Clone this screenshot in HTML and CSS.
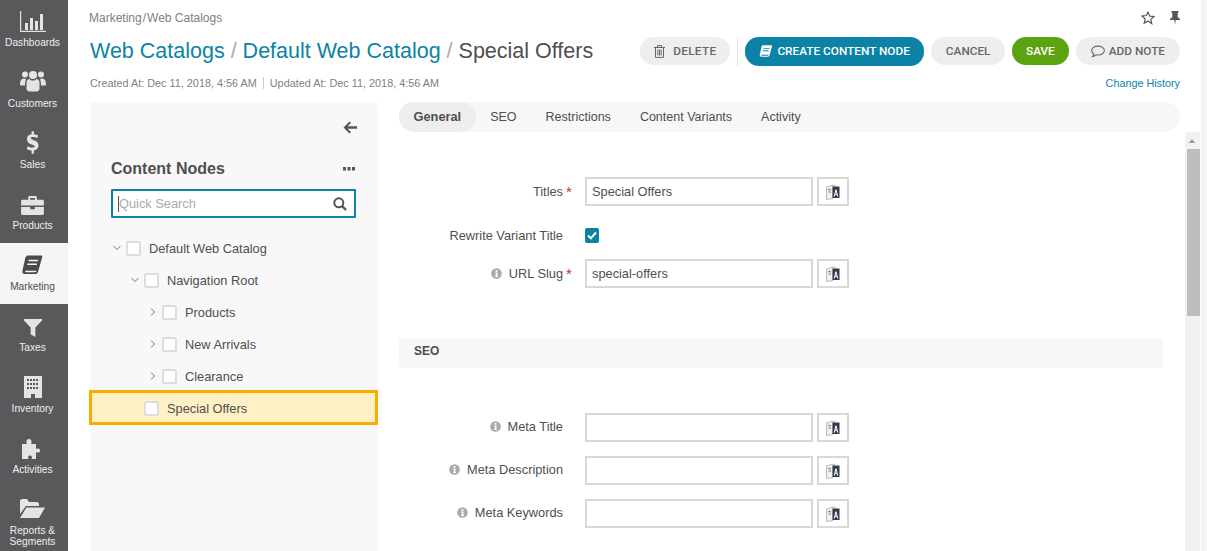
FILE: index.html
```html
<!DOCTYPE html>
<html lang="en">
<head>
    <title>Special Offers</title>
    <meta charset="utf-8">
    <link rel="stylesheet" href="styles.css">
</head>
<body>
<svg class="defs" width="0" height="0">
    <symbol id="i-translate" viewBox="0 0 14 16">
        <path d="M.5 3L7 1v13.500l-6.500 1z" fill="#f2f2f2" stroke="#aaa" stroke-width=".8"/>
        <path d="M6.500 2.500h7V14h-7z" fill="#2f3a4a"/>
        <path d="M7.700 12.500l1.700-7h1.100l1.700 7h-1.100l-.4-1.800H9.200l-.4 1.800zM9.500 9.700h1l-.5-2.500z" fill="#fff"/>
        <path d="M1.800 5.500h3.400M3.500 4.500v1M2.300 9l2.700-2.500M2.500 6.500L5 9" stroke="#888" stroke-width=".8" fill="none"/>
        <path d="M7.500 2.500l2-1.500" stroke="#c8803a" fill="none"/>
    </symbol>
    <symbol id="i-info" viewBox="0 0 12 12">
        <circle cx="6" cy="6" r="5.800" fill="#aaa"/>
        <path d="M5 2.300h2v1.700H5zM4.700 5h2.300v3.800h.7v1H4.400v-1h.8V6h-.5z" fill="#fff"/>
    </symbol>
</svg>
<div class="app">
    <nav class="side">
        <a class="side-item">
            <svg width="26" height="21" viewBox="0 0 26 21"><path d="M.6 0v20.400H26" fill="none" stroke="#e4e4e4" stroke-width="1.200"/><path d="M5 12h3v7H5zM10 7h3v12h-3zM15 10h3v9h-3zM20 3h3v16h-3z" fill="#e4e4e4"/></svg>
            <span>Dashboards</span>
        </a>
        <a class="side-item">
            <svg width="26" height="23" viewBox="0 0 26 22"><g fill="#e4e4e4"><circle cx="5" cy="4" r="3"/><circle cx="21" cy="4" r="3"/><path d="M0 14c0-5 2-6 4.500-6L6 9c-1 2-1 4-1 6H1.500C.5 15 0 14.500 0 14zM26 14c0-5-2-6-4.500-6L20 9c1 2 1 4 1 6h3.500c1 0 1.500-.5 1.500-1z"/><circle cx="13" cy="4.500" r="4"/><path d="M6.500 12c0-2.500 2-3.500 3-3.500 1 1 2 1.500 3.500 1.500s2.500-.5 3.500-1.500c1 0 3 1 3 3.500v6c0 2-1.500 3-3 3H9.500c-1.500 0-3-1-3-3z"/></g></svg>
            <span>Customers</span>
        </a>
        <a class="side-item">
            <svg width="13" height="23" viewBox="0 0 14 24"><path d="M6 0h2.500v3c2 .2 3.500.8 4.500 1.300l-1 3C11 6.800 9.500 6.200 7.500 6.200c-1.500 0-2.300.5-2.300 1.300 0 2.300 8.300 1.500 8.300 7.800 0 2.700-1.800 4.700-5 5.200V24H6v-3.300c-2.300-.2-4-.9-5.300-1.700l1.200-3c1.400.8 3.200 1.500 5 1.500 1.600 0 2.500-.6 2.500-1.500C9.400 14 1 14.700 1 8.100 1 5.300 2.800 3.500 6 3z" fill="#e4e4e4"/></svg>
            <span>Sales</span>
        </a>
        <a class="side-item">
            <svg width="23" height="19" viewBox="0 0 24 20"><path d="M7.500 4V1.500C7.500.6 8.100 0 9 0h6c.9 0 1.500.6 1.500 1.500V4h-2V2h-5v2zM0 5.500C0 4.700.7 4 1.500 4h21c.8 0 1.500.7 1.500 1.500V10H0zM0 11.500h9.500V14h5v-2.500H24v7c0 .8-.7 1.500-1.500 1.500h-21C.7 20 0 19.300 0 18.500z" fill="#e4e4e4"/></svg>
            <span>Products</span>
        </a>
        <a class="side-item active">
            <svg width="21" height="21" viewBox="0 0 22 22"><path d="M6 .5h14c1 0 1.500.7 1.200 1.700L17 17c-.5 2-1.500 3-3.500 3H3c-2 0-3-1.300-2.500-3.500L3.500 3C4 1.500 5 .5 6 .5zM7 5l-.4 1.500h10L17 5zM5.800 9l-.4 1.500h10L15.800 9zM3.500 16.500c-.5 1 0 1.500 1 1.500h9c1 0 1.600-.5 1.800-1.500z" fill="#4a4a4a" fill-rule="evenodd"/></svg>
            <span>Marketing</span>
        </a>
        <a class="side-item">
            <svg width="18" height="18" viewBox="0 0 19 19"><path d="M0 0h19v1.500L12 9v10l-5-3V9L0 1.500z" fill="#e4e4e4"/></svg>
            <span>Taxes</span>
        </a>
        <a class="side-item">
            <svg width="18" height="22" viewBox="0 0 18 22"><path d="M0 0h18v22H11v-4H7v4H0zM3 3v2h2V3zm3 0v2h2V3zm3 0v2h2V3zm3 0v2h2V3zM3 7v2h2V7zm3 0v2h2V7zm3 0v2h2V7zm3 0v2h2V7zM3 11v2h2v-2zm3 0v2h2v-2zm3 0v2h2v-2zm3 0v2h2v-2z" fill="#e4e4e4" fill-rule="evenodd"/></svg>
            <span>Inventory</span>
        </a>
        <a class="side-item">
            <svg width="22" height="20" viewBox="0 0 22 20"><path d="M0 5h5C4 3.500 4 0 7 0s3 3.500 2 5h5v5c1.500-1 4-1 4 1.500S15.500 14 14 13v7H9.500c1-1.500.5-3.500-1.500-3.500S5.500 18.500 6.500 20H0z" fill="#e4e4e4"/></svg>
            <span>Activities</span>
        </a>
        <a class="side-item">
            <svg width="25" height="19" viewBox="0 0 25 19"><path d="M0 2c0-1 .8-2 2-2h5l2 3h8c1 0 2 1 2 2v2H6L0 15zM6.500 8.500H25l-6 10.500H0z" fill="#e4e4e4"/></svg>
            <span>Reports &amp;<br>Segments</span>
        </a>
    </nav>

    <main class="main">
        <div class="crumbs-row">
            <div class="crumbs">Marketing<i>/</i>Web Catalogs</div>
            <div class="top-icons">
                <svg width="14" height="14" viewBox="0 0 24 24"><path d="M12 2l3 6.800 7.400.7-5.600 4.900 1.700 7.300L12 17l-6.500 3.700 1.700-7.300L1.600 8.500 9 7.800z" fill="none" stroke="#555" stroke-width="2"/></svg>
                <svg width="10" height="14" viewBox="0 0 10 14"><path d="M1.500 0h7v1.200L7.700 2v4L10 8v1H5.700L5 14l-.7-5H0V8l2.300-2V2l-.8-.8z" fill="#555"/></svg>
            </div>
        </div>
        <div class="head-row">
            <h1 class="title"><a>Web Catalogs</a> <i>/</i> <a>Default Web Catalog</a> <i>/</i> Special Offers</h1>
            <div class="actions">
                <button class="btn btn-delete">
                    <svg width="11" height="13" viewBox="0 0 11 13"><path d="M3.500 2V.6h4V2M0 2.500h11M1.500 2.500v9.900h8V2.500M3.800 4.500v6M5.500 4.500v6M7.200 4.500v6" fill="none" stroke="#666" stroke-width="1"/></svg>
                    DELETE
                </button>
                <span class="act-sep"></span>
                <button class="btn btn-primary">
                    <svg width="14" height="13" viewBox="0 0 22 22"><path d="M6 .5h14c1 0 1.500.7 1.200 1.700L17 17c-.5 2-1.500 3-3.500 3H3c-2 0-3-1.300-2.500-3.500L3.500 3C4 1.500 5 .5 6 .5zM7 5l-.4 1.500h10L17 5zM5.800 9l-.4 1.500h10L15.800 9zM3.500 16.500c-.5 1 0 1.500 1 1.500h9c1 0 1.600-.5 1.800-1.500z" fill="#fff" fill-rule="evenodd"/></svg>
                    CREATE CONTENT NODE
                </button>
                <button class="btn btn-cancel">CANCEL</button>
                <button class="btn btn-save">SAVE</button>
                <button class="btn btn-note">
                    <svg width="14" height="13" viewBox="0 0 13 12"><path d="M6.500 1C3.200 1 .6 2.800.6 5.100c0 1.300.8 2.400 2.100 3.100-.2 1-.7 1.800-1.300 2.500 1.300-.2 2.500-.8 3.300-1.600.6.100 1.200.2 1.800.2 3.300 0 5.900-1.900 5.900-4.200S9.800 1 6.500 1z" fill="none" stroke="#666"/></svg>
                    ADD NOTE
                </button>
            </div>
        </div>
        <div class="meta-row">
            <div class="meta"><span>Created At: Dec 11, 2018, 4:56 AM</span><span class="meta-sep">Updated At: Dec 11, 2018, 4:56 AM</span></div>
            <a class="history">Change History</a>
        </div>

        <div class="columns">
            <aside class="tree-panel">
                <div class="collapse-row">
                    <svg width="14" height="13" viewBox="0 0 14 13"><path d="M6.500.6l1.500 1.500L4.700 5.200H14v2.600H4.700L8 10.900l-1.500 1.500L.5 6.500z" fill="#555"/></svg>
                </div>
                <div class="tree-head">
                    <span>Content Nodes</span>
                    <svg width="12" height="4" viewBox="0 0 12 4"><path d="M0 0h3v3.500H0zM4.500 0h3v3.500h-3zM9 0h3v3.500H9z" fill="#555"/></svg>
                </div>
                <div class="search">
                    <span class="caret"></span><span class="search-ph">Quick Search</span>
                    <svg width="14" height="14" viewBox="0 0 14 14"><circle cx="5.800" cy="5.800" r="4.500" fill="none" stroke="#555" stroke-width="2"/><path d="M9 9l4 4" stroke="#555" stroke-width="2.400"/></svg>
                </div>
                <ul class="tree">
                    <li class="node lvl0"><svg class="chev" viewBox="0 0 8 8"><path d="M.5 2l3.500 3.500L7.500 2" fill="none" stroke="#777"/></svg><b class="check"></b>Default Web Catalog</li>
                    <li class="node lvl1"><svg class="chev" viewBox="0 0 8 8"><path d="M.5 2l3.500 3.500L7.500 2" fill="none" stroke="#777"/></svg><b class="check"></b>Navigation Root</li>
                    <li class="node lvl2"><svg class="chev" viewBox="0 0 8 8"><path d="M2 .5l3.500 3.500L2 7.500" fill="none" stroke="#777"/></svg><b class="check"></b>Products</li>
                    <li class="node lvl2"><svg class="chev" viewBox="0 0 8 8"><path d="M2 .5l3.500 3.500L2 7.500" fill="none" stroke="#777"/></svg><b class="check"></b>New Arrivals</li>
                    <li class="node lvl2"><svg class="chev" viewBox="0 0 8 8"><path d="M2 .5l3.500 3.500L2 7.500" fill="none" stroke="#777"/></svg><b class="check"></b>Clearance</li>
                    <li class="node selected"><b class="check"></b>Special Offers</li>
                </ul>
            </aside>

            <section class="content">
                <div class="tabs">
                    <a class="tab active">General</a>
                    <a class="tab">SEO</a>
                    <a class="tab">Restrictions</a>
                    <a class="tab">Content Variants</a>
                    <a class="tab">Activity</a>
                </div>
                <div class="scroll">
                    <div class="form">
                        <div class="field first">
                            <label>Titles<em>*</em></label>
                            <div class="control"><div class="input">Special Offers</div><div class="tr"><svg width="14" height="16"><use href="#i-translate"/></svg></div></div>
                        </div>
                        <div class="field check-field">
                            <label class="no-req">Rewrite Variant Title</label>
                            <div class="control"><div class="checked"><svg width="10" height="9" viewBox="0 0 10 9"><path d="M1 4.500l2.800 2.800L9 1.500" fill="none" stroke="#fff" stroke-width="2"/></svg></div></div>
                        </div>
                        <div class="field">
                            <label><svg class="info" width="11" height="11"><use href="#i-info"/></svg>URL Slug<em>*</em></label>
                            <div class="control"><div class="input">special-offers</div><div class="tr"><svg width="14" height="16"><use href="#i-translate"/></svg></div></div>
                        </div>
                        <div class="section-title">SEO</div>
                        <div class="field seo-field">
                            <label class="no-req"><svg class="info" width="11" height="11"><use href="#i-info"/></svg>Meta Title</label>
                            <div class="control"><div class="input"></div><div class="tr"><svg width="14" height="16"><use href="#i-translate"/></svg></div></div>
                        </div>
                        <div class="field seo-field">
                            <label class="no-req"><svg class="info" width="11" height="11"><use href="#i-info"/></svg>Meta Description</label>
                            <div class="control"><div class="input"></div><div class="tr"><svg width="14" height="16"><use href="#i-translate"/></svg></div></div>
                        </div>
                        <div class="field seo-field">
                            <label class="no-req"><svg class="info" width="11" height="11"><use href="#i-info"/></svg>Meta Keywords</label>
                            <div class="control"><div class="input"></div><div class="tr"><svg width="14" height="16"><use href="#i-translate"/></svg></div></div>
                        </div>
                    </div>
                    <div class="scrollbar"><span class="arrow"></span><span class="thumb"></span></div>
                </div>
            </section>
        </div>
    </main>
    <div class="page-strip"></div>
</div>
</body>
</html>
```
FILE: styles.css
```css
html, body {
    margin: 0;
    height: 100%;
    overflow: hidden;
    background: #fff;
}
body {
    font-family: "Liberation Sans", Arial, sans-serif;
    font-size: 12.8px;
    color: #4f4f4f;
}
.defs { display: block; height: 0; }

.app {
    display: flex;
    height: 551px;
    overflow: hidden;
}

/* left menu */
.side {
    width: 68px;
    flex: none;
    margin-top: -1px;
    background: #59595b;
}
.side-item {
    height: 61px;
    box-sizing: border-box;
    padding: 0 3px 12px 0;
    display: flex;
    flex-direction: column;
    align-items: center;
    justify-content: flex-end;
    gap: 5px;
    color: #eee;
    font-size: 10.2px;
    line-height: 11px;
    text-align: center;
}
.side-item.active {
    background: #f5f5f5;
    color: #4f4f4f;
}
.side-item:last-child { padding-bottom: 1px; gap: 7px; }

/* main area */
.main {
    flex: 1;
    min-width: 0;
    padding: 0 21px 0 22px;
}
.page-strip {
    width: 6px;
    flex: none;
    background: #f4f4f4;
}
.crumbs-row {
    display: flex;
    justify-content: space-between;
    align-items: center;
    height: 36px;
    margin-left: -1px;
}
.crumbs { font-size: 12px; color: #7f7f7f; }
.crumbs i { font-style: normal; margin: 0 1px; }
.top-icons {
    display: flex;
    align-items: center;
    gap: 15px;
    margin: -1px 0 0;
}
.head-row {
    display: flex;
    justify-content: space-between;
    align-items: center;
    height: 30px;
}
.title {
    margin: 0;
    font-size: 21.5px;
    font-weight: 400;
    color: #4f4f4f;
    white-space: nowrap;
}
.title a { color: #0c83a6; }
.title i { font-style: normal; color: #aaa; }
.actions {
    display: flex;
    align-items: center;
    gap: 7px;
}
.btn {
    height: 28px;
    padding: 0 15px;
    border: 0;
    border-radius: 14px;
    background: #eee;
    color: #666;
    font: 500 11.8px Roboto, sans-serif;
    display: flex;
    align-items: center;
    gap: 5px;
    white-space: nowrap;
}
.btn-delete { padding: 0 14px; gap: 8px; letter-spacing: .3px; }
.act-sep {
    width: 1px;
    height: 29px;
    background: #e4e4e4;
}
.btn-primary {
    height: 29px;
    padding: 0 14.500px 0 14px;
    gap: 4px;
    background: #0c83a6;
    color: #fff;
}
.btn-cancel { padding: 0 14.500px; }
.btn-save {
    padding: 0 14px;
    background: #5ba30f;
    color: #fff;
}
.btn-note { padding: 0 15px; gap: 4px; }
.meta-row {
    display: flex;
    justify-content: space-between;
    align-items: center;
    height: 22px;
    margin-top: 6px;
    margin-bottom: 8px;
}
.meta { font-size: 10.85px; color: #7f7f7f; }
.meta-sep {
    margin-left: 6px;
    padding-left: 6px;
    border-left: 1px solid #ccc;
}
.history { font-size: 10.8px; color: #0c83a6; }

.columns {
    display: flex;
    gap: 21px;
    align-items: flex-start;
}

/* tree */
.tree-panel {
    width: 288px;
    height: 460px;
    flex: none;
    background: #f8f8f8;
    border-radius: 4px;
}
.collapse-row {
    display: flex;
    justify-content: flex-end;
    padding: 19px 21px 0 0;
    height: 30px;
}
.tree-head {
    display: flex;
    justify-content: space-between;
    align-items: center;
    margin: 7px 23px 0 21px;
    height: 22px;
    font-size: 16px;
    font-weight: 700;
}
.search {
    display: flex;
    align-items: center;
    box-sizing: border-box;
    height: 29px;
    margin: 9px 22px 0 21px;
    padding: 0 7px 0 5px;
    border: 2px solid #0c83a6;
    background: #fff;
    border-radius: 1px;
}
.caret { width: 1px; height: 16px; background: #555; }
.search-ph { flex: 1; color: #aaa; }
.tree {
    list-style: none;
    margin: 14px 0 0;
    padding: 0;
}
.node {
    display: flex;
    align-items: center;
    height: 32px;
    box-sizing: border-box;
}
.lvl0 { padding-left: 23px; }
.lvl1 { padding-left: 41px; }
.lvl2 { padding-left: 59px; }
.chev {
    width: 8px;
    height: 8px;
    margin-right: 5px;
    flex: none;
}
.check {
    box-sizing: border-box;
    width: 15px;
    height: 15px;
    margin-right: 8px;
    border: 2px solid #ddd;
    border-radius: 2px;
    background: #fff;
    flex: none;
}
.node.selected {
    width: 289px;
    height: 35px;
    margin: -2px 0 0 -1px;
    padding: 1px 0 0 52px;
    background: #fff0c6;
    border: 3px solid #fdab00;
}

/* right side */
.content {
    flex: 1;
    min-width: 0;
}
.tabs {
    display: flex;
    height: 30px;
    background: #f7f7f7;
    border-radius: 15px;
    align-items: center;
    font-size: 12.5px;
}
.tab {
    height: 30px;
    line-height: 30px;
    padding: 0 14.500px;
    border-radius: 15px;
}
.tab.active {
    background: #eee;
    font-size: 12.8px;
    font-weight: 700;
}
.scroll {
    display: flex;
    justify-content: space-between;
    width: 801px;
}
.form { width: 764px; }
.field {
    display: flex;
    align-items: center;
    height: 29px;
    margin-top: 14px;
}
.field.first { margin-top: 45px; }
.check-field { height: 15px; margin-top: 22px; }
.check-field + .field { margin-top: 16px; }
.field label {
    width: 173px;
    display: flex;
    justify-content: flex-end;
    align-items: center;
    white-space: nowrap;
}
.field label em {
    width: 6px;
    margin-left: 3px;
    color: #c9302c;
    font-size: 15px;
    font-style: normal;
}
.field label.no-req { width: 164px; margin-right: 9px; }
.seo-field label { padding-bottom: 2px; }
.info { margin-right: 7px; }
.control {
    margin-left: 13px;
    display: flex;
    align-items: center;
    gap: 4px;
}
.input {
    box-sizing: border-box;
    width: 228px;
    height: 29px;
    padding: 0 5px;
    line-height: 25px;
    border: 2px solid #d8d8d8;
}
.tr {
    box-sizing: border-box;
    width: 32px;
    height: 29px;
    border: 2px solid #d8d8d8;
    display: flex;
    align-items: center;
    justify-content: center;
}
.checked {
    width: 14px;
    height: 15px;
    background: #0c83a6;
    border-radius: 2px;
    display: flex;
    align-items: center;
    justify-content: center;
}
.section-title {
    margin-top: 50px;
    margin-bottom: 45px;
    height: 30px;
    line-height: 27px;
    padding-left: 15px;
    background: #f7f7f7;
    border-radius: 3px;
    font-weight: 700;
    font-size: 12px;
}
.section-title + .field { margin-top: 0; }
.scrollbar {
    width: 15px;
    height: 419px;
    background: #f1f1f1;
}
.arrow {
    display: block;
    width: 0;
    margin: 7px 0 0 4px;
    border: solid transparent;
    border-width: 0 3.500px 4px;
    border-bottom-color: #999;
}
.thumb {
    display: block;
    margin: 6px 0 0 2px;
    height: 167px;
    background: #bdbdbd;
}
```
